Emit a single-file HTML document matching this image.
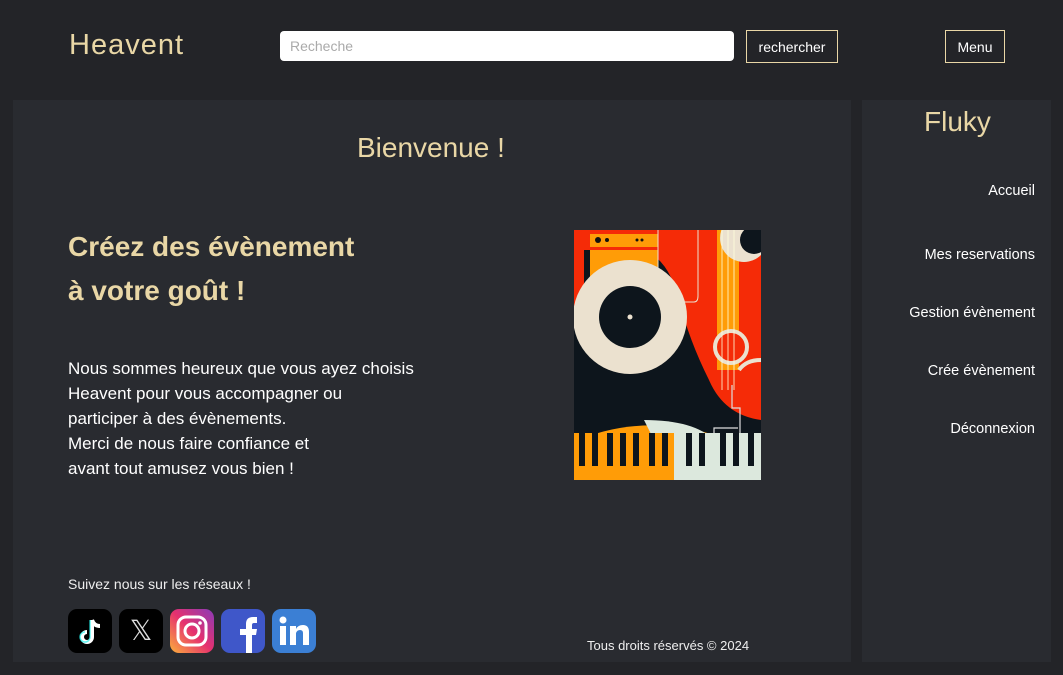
<!DOCTYPE html>
<html><head><meta charset="utf-8"><style>
*{margin:0;padding:0;box-sizing:border-box}
body{width:1063px;height:675px;background:#232428;font-family:"Liberation Sans",sans-serif;position:relative;overflow:hidden;color:#fff}
.abs{position:absolute}
.gold{color:#e9d7a6}
.panel{background:#292b30}
.btn{border:1px solid #e9d7a6;color:#fff;font-size:14px;display:flex;align-items:center;justify-content:center}
.nav{right:28px;font-size:14.5px;color:#fff;text-align:right}
.ico{width:44px;height:44px;border-radius:9px;top:609px}
</style></head><body>
<div class="abs gold" style="left:69px;top:29px;font-size:29px;letter-spacing:1px">Heavent</div>
<div class="abs" style="left:280px;top:31px;width:454px;height:30px;background:#fff;border-radius:4px;color:#aaa;font-size:14px;padding:7px 10px">Recheche</div>
<div class="abs btn" style="left:746px;top:30px;width:92px;height:33px">rechercher</div>
<div class="abs btn" style="left:945px;top:30px;width:60px;height:33px">Menu</div>

<div class="abs panel" style="left:13px;top:100px;width:838px;height:562px"></div>
<div class="abs panel" style="left:862px;top:100px;width:189px;height:562px"></div>

<div class="abs gold" style="left:357px;top:132px;font-size:28px">Bienvenue !</div>
<div class="abs gold" style="left:68px;top:225px;font-size:28px;font-weight:bold;line-height:44px">Créez des évènement<br>à votre goût !</div>
<div class="abs" style="left:68px;top:356px;font-size:17px;line-height:25px">Nous sommes heureux que vous ayez choisis<br>Heavent pour vous accompagner ou<br>participer à des évènements.<br>Merci de nous faire confiance et<br>avant tout amusez vous bien !</div>

<svg class="abs" style="left:574px;top:230px" width="187" height="250" viewBox="0 0 187 250">
<rect width="187" height="250" fill="#0d151c"/>
<path d="M0 0H187V190Q150 185 135 150Q115 110 105 70Q95 30 70 20H0Z" fill="#f52b07"/>
<rect x="0" y="0" width="10" height="90" fill="#f52b07"/>
<rect x="16" y="4" width="68" height="13" fill="#ff9c07"/>
<rect x="16" y="20" width="68" height="60" fill="#ff9c07"/>
<path d="M84 0V65Q84 72 90 72H120Q124 72 124 66V0" fill="none" stroke="#ebe1cf" stroke-width="1"/>
<circle cx="24" cy="10" r="3" fill="#111"/><circle cx="33" cy="10" r="2" fill="#111"/>
<circle cx="63" cy="10" r="1.5" fill="#111"/><circle cx="68" cy="10" r="1.5" fill="#111"/>
<circle cx="56" cy="87" r="57" fill="#ebe1cf"/>
<circle cx="56" cy="87" r="31" fill="#0d151c"/>
<circle cx="56" cy="87" r="2.5" fill="#ebe1cf"/>
<rect x="143" y="0" width="22" height="140" fill="#ff9c07"/>
<circle cx="170" cy="8" r="24" fill="#ebe1cf"/><circle cx="180" cy="10" r="14" fill="#0d151c"/>
<circle cx="157" cy="117" r="16" fill="#f52b07" stroke="#ebe1cf" stroke-width="4"/>
<path d="M165 140Q172 130 187 130" fill="none" stroke="#ebe1cf" stroke-width="4"/>
<path d="M148 0V160M154 0V160M160 0V160" stroke="#ffd" stroke-width=".8"/>
<path d="M158 155V178H166V210H140V198H164" fill="none" stroke="#ddd" stroke-width="1.2"/>
<path d="M0 212Q60 185 130 202L140 205V250H0Z" fill="#ff9c07"/>
<path d="M70 190Q120 190 140 210V250H100Z" fill="#dce8dd"/>
<rect x="0" y="203" width="100" height="47" fill="#ff9c07"/>
<rect x="100" y="203" width="87" height="47" fill="#dce8dd"/>
<g fill="#0d151c">
<rect x="5" y="203" width="6" height="33"/><rect x="18" y="203" width="6" height="33"/><rect x="33" y="203" width="6" height="33"/><rect x="46" y="203" width="6" height="33"/><rect x="59" y="203" width="6" height="33"/><rect x="75" y="203" width="6" height="33"/><rect x="88" y="203" width="6" height="33"/><rect x="112" y="203" width="6" height="33"/><rect x="125" y="203" width="6" height="33"/><rect x="146" y="203" width="6" height="33"/><rect x="159" y="203" width="6" height="33"/><rect x="174" y="203" width="6" height="33"/>
</g>
</svg>

<div class="abs" style="left:68px;top:576px;font-size:14px;color:#eee">Suivez nous sur les réseaux !</div>
<div class="abs ico" style="left:68px;background:#000"><svg width="44" height="44"><path d="M24 11v17a5 5 0 1 1-5-5M24 11q2 6 8 6" fill="none" stroke="#fff" stroke-width="4"/><path d="M22 11v17a5 5 0 1 1-5-5" fill="none" stroke="#25f4ee" stroke-width="1.5" opacity=".7"/></svg></div>
<div class="abs ico" style="left:119px;background:#000;color:#ddd;font-size:28px;text-align:center;line-height:44px">𝕏</div>
<div class="abs ico" style="left:170px;background:linear-gradient(45deg,#fbb03b,#e6316e 50%,#8a3ab9)"><svg width="44" height="44"><rect x="8" y="8" width="28" height="28" rx="8" fill="none" stroke="#fff" stroke-width="3"/><circle cx="22" cy="22" r="7" fill="none" stroke="#fff" stroke-width="3"/><circle cx="30" cy="14" r="1.8" fill="#fff"/></svg></div>
<div class="abs ico" style="left:221px;background:#3f57c9;overflow:hidden"><svg width="44" height="44"><path d="M25 44V26h-6v-6h6v-5q0-7 7-7h4v6h-3q-2 0-2 2v4h5l-1 6h-4v18z" fill="#fff"/></svg></div>
<div class="abs ico" style="left:272px;background:#3b7fd4"><svg width="44" height="44"><rect x="8" y="17" width="6" height="19" fill="#fff"/><circle cx="11" cy="11" r="3.5" fill="#fff"/><path d="M18 17h6v3q2-4 7-4 6 0 6 7v13h-6V24q0-3-3-3t-4 3v12h-6z" fill="#fff"/></svg></div>

<div class="abs" style="left:587px;top:638px;font-size:13px;color:#eee">Tous droits réservés © 2024</div>

<div class="abs gold" style="left:924px;top:106px;font-size:28px">Fluky</div>
<div class="abs nav" style="top:183px">Accueil</div>
<div class="abs nav" style="top:247px">Mes reservations</div>
<div class="abs nav" style="top:305px">Gestion évènement</div>
<div class="abs nav" style="top:363px">Crée évènement</div>
<div class="abs nav" style="top:421px">Déconnexion</div>
</body></html>
